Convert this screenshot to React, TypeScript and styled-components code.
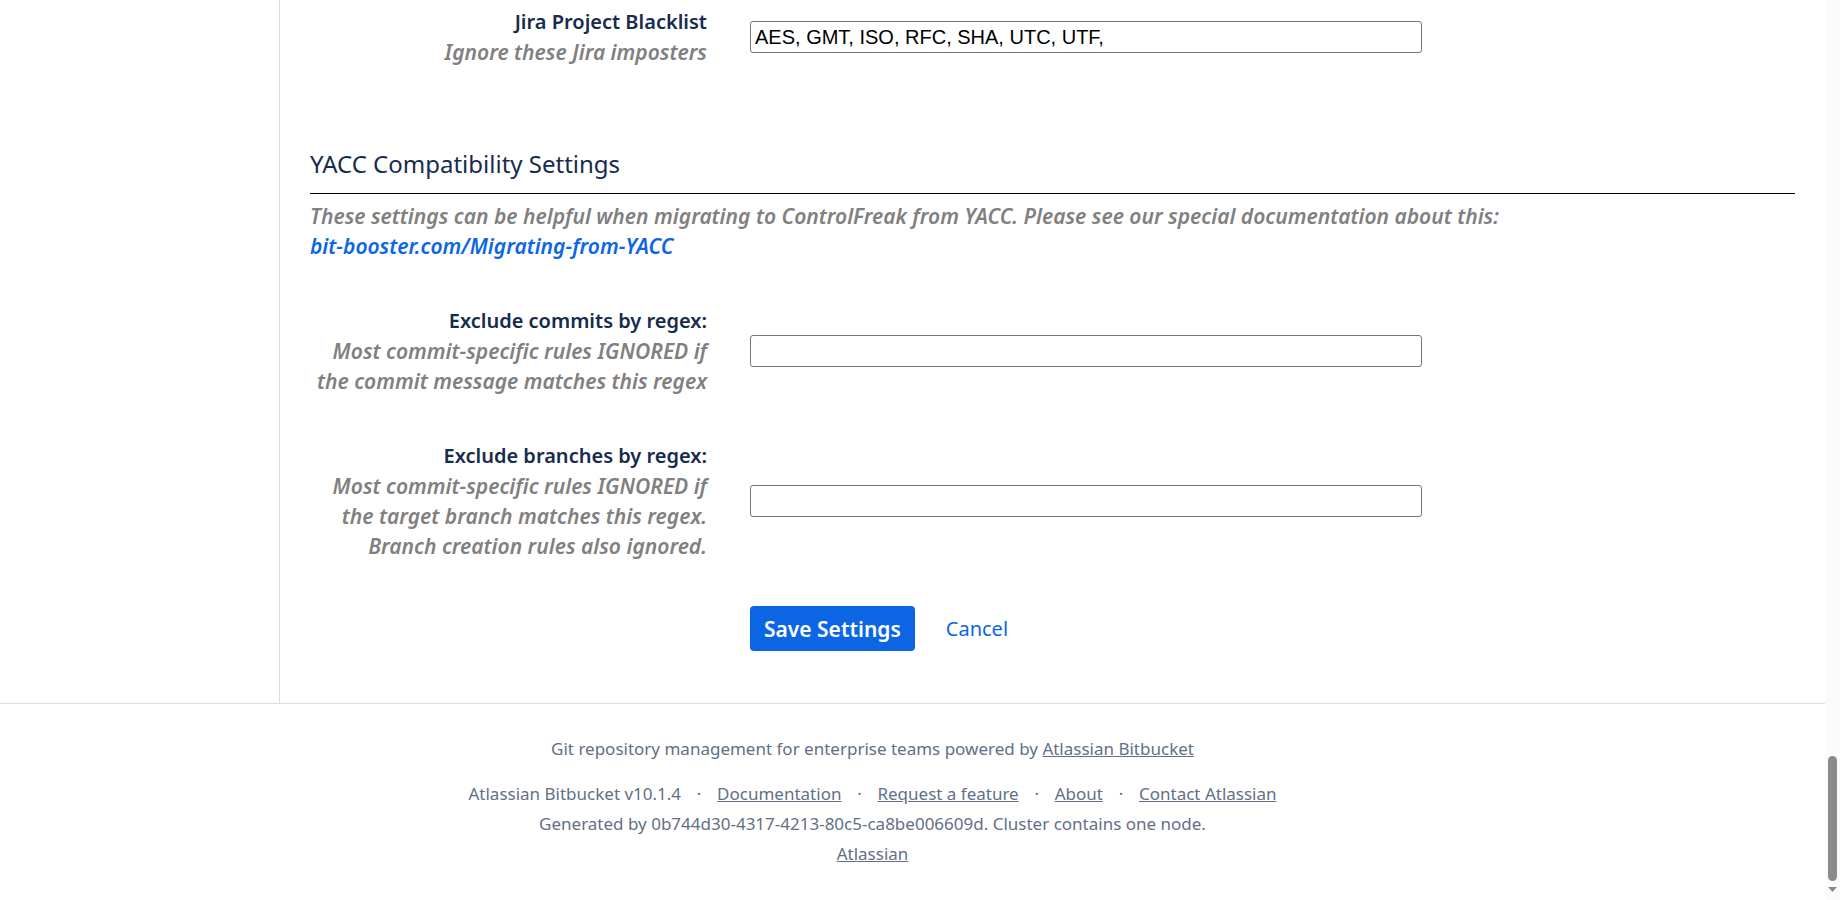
import React from "react";
import styled, { createGlobalStyle } from "styled-components";

const GlobalStyle = createGlobalStyle`
  *, *::before, *::after { box-sizing: border-box; }
  body {
    margin: 0;
    background: #fff;
    color: #172b4d;
    font-family: "Noto Sans", "Open Sans", sans-serif;
    font-size: 20px;
    line-height: 30px;
  }
`;

const Window = styled.div`
  display: flex;
  min-height: 100vh;
`;

const Page = styled.div`
  flex: 1;
  min-width: 0;
  display: flex;
  flex-direction: column;
`;

const Body = styled.div`
  display: flex;
`;

const Sidebar = styled.aside`
  flex: 0 0 280px;
  border-right: 1px solid #dddddd;
`;

const Content = styled.main`
  flex: 1;
  min-width: 0;
  padding: 7px 30px 52px;
`;

const FieldRow = styled.div`
  display: grid;
  grid-template-columns: 397px minmax(0, 672px);
  column-gap: 43px;
  align-items: center;
  margin-bottom: 45px;
`;

const FieldLabel = styled.label`
  text-align: right;
  font-weight: 600;
`;

const Hint = styled.span`
  display: block;
  color: #808080;
  font-size: 21px;
  font-style: italic;
  white-space: nowrap;
`;

const TextInput = styled.input`
  width: 100%;
  height: 32px;
  padding: 1px 4px;
  border: 1px solid #767676;
  border-radius: 3px;
  background: #fff;
  color: #000;
  font-family: "Liberation Sans", Arial, sans-serif;
  font-size: 20px;
`;

const SectionTitle = styled.h3`
  margin: 79px 0 7px;
  padding-bottom: 12px;
  border-bottom: 1px solid #000;
  font-size: 24px;
  font-weight: 400;
  line-height: 35px;
`;

const Description = styled.p`
  margin: 0 0 45px;
  color: #808080;
  font-size: 21px;
  font-style: italic;
  font-weight: 600;
`;

const BlueLink = styled.a`
  color: #0c66e4;
  text-decoration: none;
`;

const Actions = styled.div`
  display: flex;
  align-items: center;
  gap: 31px;
  margin-left: 440px;
`;

const SaveButton = styled.button`
  height: 45px;
  padding: 0 14px;
  border: 0;
  border-radius: 4px;
  background: #0c66e4;
  color: #fff;
  font: inherit;
  font-size: 21px;
  font-weight: 600;
`;

const Footer = styled.footer`
  border-top: 1px solid #dddddd;
  padding: 30px 80px 30px 0;
  color: #626f86;
  font-size: 17px;
  text-align: center;
`;

const FooterText = styled.p`
  margin: 0;
`;

const FooterLinks = styled.ul`
  display: flex;
  justify-content: center;
  margin: 15px 0 0;
  padding: 0;
  list-style: none;
`;

const FooterItem = styled.li`
  display: flex;

  &:not(:last-child)::after {
    content: "·";
    width: 36px;
    text-align: center;
  }
`;

const FooterLink = styled.a`
  color: inherit;
  text-decoration: underline;
`;

const ScrollTrack = styled.div`
  flex: 0 0 15px;
  display: flex;
  flex-direction: column;
  align-items: center;
  justify-content: flex-end;
  gap: 6px;
  padding-bottom: 8px;
  background: #fbfbfb;
`;

const ScrollThumb = styled.div`
  width: 9px;
  height: 125px;
  border-radius: 5px;
  background: #8b8b8b;
`;

type FieldProps = { id: string; label: string; hints: string[]; value?: string };

function Field({ id, label, hints, value = "" }: FieldProps) {
  return (
    <FieldRow>
      <FieldLabel htmlFor={id}>
        {label}
        {hints.map((line) => (
          <Hint key={line}>{line}</Hint>
        ))}
      </FieldLabel>
      <TextInput id={id} type="text" defaultValue={value} />
    </FieldRow>
  );
}

export default function App() {
  return (
    <Window>
      <GlobalStyle />
      <Page>
        <Body>
          <Sidebar />
          <Content>
            <form onSubmit={(e) => e.preventDefault()}>
              <Field
                id="jira-blacklist"
                label="Jira Project Blacklist"
                hints={["Ignore these Jira imposters"]}
                value="AES, GMT, ISO, RFC, SHA, UTC, UTF,"
              />
              <SectionTitle>YACC Compatibility Settings</SectionTitle>
              <Description>
                These settings can be helpful when migrating to ControlFreak from YACC. Please see our special
                documentation about this:
                <br />
                <BlueLink href="#migrating">bit-booster.com/Migrating-from-YACC</BlueLink>
              </Description>
              <Field
                id="exclude-commits"
                label="Exclude commits by regex:"
                hints={["Most commit-specific rules IGNORED if", "the commit message matches this regex"]}
              />
              <Field
                id="exclude-branches"
                label="Exclude branches by regex:"
                hints={[
                  "Most commit-specific rules IGNORED if",
                  "the target branch matches this regex.",
                  "Branch creation rules also ignored.",
                ]}
              />
              <Actions>
                <SaveButton type="submit">Save Settings</SaveButton>
                <BlueLink href="#cancel">Cancel</BlueLink>
              </Actions>
            </form>
          </Content>
        </Body>
        <Footer>
          <FooterText>
            Git repository management for enterprise teams powered by{" "}
            <FooterLink href="#bitbucket">Atlassian Bitbucket</FooterLink>
          </FooterText>
          <FooterLinks>
            <FooterItem>Atlassian Bitbucket v10.1.4</FooterItem>
            <FooterItem><FooterLink href="#documentation">Documentation</FooterLink></FooterItem>
            <FooterItem><FooterLink href="#request">Request a feature</FooterLink></FooterItem>
            <FooterItem><FooterLink href="#about">About</FooterLink></FooterItem>
            <FooterItem><FooterLink href="#contact">Contact Atlassian</FooterLink></FooterItem>
          </FooterLinks>
          <FooterText>Generated by 0b744d30-4317-4213-80c5-ca8be006609d. Cluster contains one node.</FooterText>
          <FooterText><FooterLink href="#atlassian">Atlassian</FooterLink></FooterText>
        </Footer>
      </Page>
      <ScrollTrack aria-hidden="true">
        <ScrollThumb />
        <svg width="9" height="5" viewBox="0 0 9 5">
          <path d="M0 0h9L4.5 5z" fill="#8b8b8b" />
        </svg>
      </ScrollTrack>
    </Window>
  );
}
